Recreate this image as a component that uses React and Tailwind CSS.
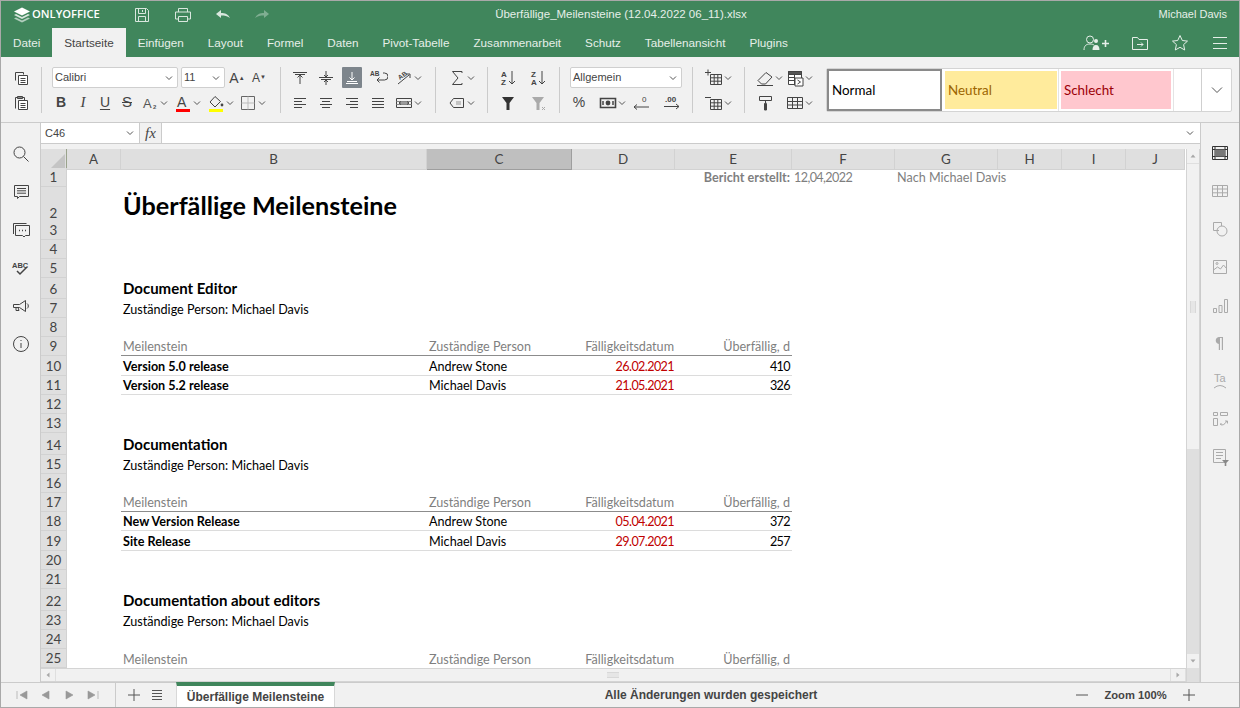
import React from "react";

const GRID =
  "grid grid-cols-[26px_54px_306px_145px_103px_117px_103px_103px_64px_64px_59px]";
const COLUMNS = ["A", "B", "C", "D", "E", "F", "G", "H", "I", "J"];
const SHEET_FONT = "font-['Lato',sans-serif] text-[12.6px]";

const Svg = ({ children, className = "w-5 h-5", stroke = "#444" }) => (
  <svg viewBox="0 0 20 20" className={`${className} shrink-0`} fill="none" stroke={stroke} strokeWidth="1">
    {children}
  </svg>
);

const Chev = () => (
  <svg viewBox="0 0 8 8" className="w-2 h-2 shrink-0" fill="none" stroke="#555" strokeWidth="1">
    <path d="M1 2.5 4 5.5 7 2.5" />
  </svg>
);

// toolbar glyphs
const icons = {
  copy: <><path d="M4.5 12.5v-8h8v2" /><path d="M7.5 7.5h9v9h-9z" fill="#fff" /><path d="M9.5 10.5h5M9.5 12.5h5M9.5 14.5h5" /></>,
  paste: <><path d="M4.5 15.5v-11h2M11.5 4.5h2v3" /><path d="M6.5 3.5h5v2h-5z" fill="#888" /><path d="M7.5 7.5h9v9h-9z" fill="#fff" /><path d="M9.5 10.5h5M9.5 12.5h5M9.5 14.5h5" /></>,
  alignTop: <><path d="M3 4.5h14M5 6.5h10" /><path d="M10 7v9M7.5 9.5 10 7l2.5 2.5" /></>,
  alignMid: <><path d="M3 9.5h14M5 11.5h10" /><path d="M10 3v6M8 7l2 2 2-2M10 17v-5M8 14l2-2 2 2" /></>,
  alignBottom: <><path d="M4 15.5h12" stroke="#fff" /><path d="M5 13.5h10" stroke="#fff" /><path d="M10 4v8M7.5 9.5 10 12l2.5-2.5" stroke="#fff" /></>,
  wrap: <><text x="2" y="8" fontSize="6.5" fontWeight="700" fill="#444" stroke="none" fontFamily="Liberation Sans">AB</text><path d="M15 5h1.5a2.5 2.5 0 0 1 0 7H9M11.5 9.5 9 12l2.5 2.5" /></>,
  orient: <><text x="4" y="10" fontSize="6.5" fontWeight="700" fill="#444" stroke="none" fontFamily="Liberation Sans" transform="rotate(-35 8 8)">AB</text><path d="M4 16 15 7M12 6h4v4" /></>,
  left: <path d="M4 5.5h12M4 8.5h8M4 11.5h12M4 14.5h8" />,
  center: <path d="M4 5.5h12M6 8.5h8M4 11.5h12M6 14.5h8" />,
  right: <path d="M4 5.5h12M8 8.5h8M4 11.5h12M8 14.5h8" />,
  justify: <path d="M4 5.5h12M4 8.5h12M4 11.5h12M4 14.5h12" />,
  merge: <><path d="M2.5 5.5h15v9h-15z" /><path d="M2.5 8.5h15M2.5 11.5h15" stroke="#888" /><path d="M5 10h10M7 8.5 5 10l2 1.5M13 8.5l2 1.5-2 1.5" /></>,
  sum: <path d="M15 5V3.5H5.5L11 10l-5.5 6.5H15V15" />,
  named: <><path d="M6.5 5.5h10v9h-10L3 10z" /><path d="M9 8h5v4H9z" fill="#888" stroke="none" /><path d="M9 9h5M9 11h5" stroke="#fff" /></>,
  az: <><text x="3" y="9" fontSize="8" fontWeight="700" fill="#444" stroke="none" fontFamily="Liberation Sans">A</text><text x="3" y="17" fontSize="8" fontWeight="700" fill="#444" stroke="none" fontFamily="Liberation Sans">Z</text><path d="M14 3v13M11 13l3 3 3-3" /></>,
  za: <><text x="3" y="9" fontSize="8" fontWeight="700" fill="#444" stroke="none" fontFamily="Liberation Sans">Z</text><text x="3" y="17" fontSize="8" fontWeight="700" fill="#444" stroke="none" fontFamily="Liberation Sans">A</text><path d="M14 3v13M11 13l3 3 3-3" /></>,
  filter: <path d="M4 4h12l-4.5 6v7h-3v-7z" fill="#333" stroke="none" />,
  filterOff: <><path d="M4 4h12l-4.5 6v7h-3v-7z" fill="#aaa" stroke="none" /><path d="M14 14l3 3M17 14l-3 3" stroke="#aaa" /></>,
  currency: <><path d="M2.5 5.5h15v9h-15z" strokeWidth="1.6" stroke="#444" /><circle cx="10" cy="10" r="2.4" fill="#444" stroke="none" /><path d="M5 8v4M15 8v4" strokeWidth="1.5" /></>,
  decDown: <><text x="11" y="9" fontSize="8" fill="#444" stroke="none" fontFamily="Liberation Sans">0</text><path d="M18 14H3M6 11.5 3 14l3 2.5" /></>,
  decUp: <><text x="3" y="9" fontSize="8" fontWeight="700" fill="#444" stroke="none" fontFamily="Liberation Sans">.00</text><path d="M2 13.5h15M14 11l3 2.5-3 2.5" /></>,
  insert: <><path d="M6.5 6.5h11v10h-11zM6.5 9.8h11M6.5 13.2h11M10.2 6.5v10M13.8 6.5v10" /><path d="M1 4.5h6M4 1.5v6" /></>,
  remove: <><path d="M6.5 6.5h11v10h-11zM6.5 9.8h11M6.5 13.2h11M10.2 6.5v10M13.8 6.5v10" /><path d="M1 4.5h6" /></>,
  eraser: <path d="M3 12.5 11 4.5l6 4.5-6.5 7H6.5zM2 17.5h16" />,
  conditional: <><path d="M3.5 3.5h13v13h-13z" fill="#fff" /><path d="M3.5 3.5h13v3h-13z" fill="#555" /><path d="M3.5 9.5h6M3.5 12.5h6M9.5 6.5v10" /><path d="M10 10h8v8h-8z" fill="#fff" /><path d="M12.5 12l3 2-3 2" /></>,
  roller: <><path d="M4.5 3.5h12v4h-12z" /><path d="M10.5 7.5v3h-1v6.5h2V10.5" fill="#444" /></>,
  table: <><path d="M2.5 4.5h15v11h-15z" /><path d="M2.5 8.5h15M2.5 12h15M7.5 4.5v11M12.5 4.5v11" /></>,
};

const Glyph = ({ name }) => <Svg>{icons[name]}</Svg>;

const Drop = ({ name, className = "" }) => (
  <div className={`flex items-center w-7 ${className}`}>
    <Glyph name={name} />
    <Chev />
  </div>
);

const Letter = ({ children, className = "" }) => (
  <div className={`w-[22px] h-[22px] flex items-center justify-center text-[#444] ${className}`}>
    {children}
  </div>
);

const Group = ({ className = "", children }) => (
  <div className={`h-[46px] flex flex-col gap-[4px] border-r border-[#cbcbcb] ${className}`}>{children}</div>
);

const Row = ({ children, className = "" }) => (
  <div className={`h-[21px] flex items-center ${className}`}>{children}</div>
);

const SelectBox = ({ value, className }) => (
  <div className={`h-[21px] bg-white border border-[#cfcfcf] rounded-[2px] flex items-center justify-between pl-[2px] pr-[4px] text-[11px] text-[#444] ${className}`}>
    <span>{value}</span>
    <Chev />
  </div>
);

const ColorA = ({ bar, children }) => (
  <svg viewBox="0 0 20 20" className="w-5 h-5 shrink-0" fill="none" stroke="#444">
    {children}
    <path d="M3 16h14v3H3z" fill={bar} stroke="none" />
  </svg>
);

function Toolbar() {
  return (
    <div className="h-[66px] bg-[#f1f1f1] border-b border-[#cbcbcb] pt-[10px] flex items-start font-['Liberation_Sans',sans-serif]">
      <Group className="w-[41px] items-center">
        <Row><Glyph name="copy" /></Row>
        <Row><Glyph name="paste" /></Row>
      </Group>

      <Group className="w-[239px]">
        <Row className="pl-[10px]">
          <SelectBox value="Calibri" className="w-[126px]" />
          <SelectBox value="11" className="w-[44px] ml-[3px]" />
          <div className="w-[22px] text-center text-[14px] text-[#444] ml-[1px] leading-none">A<sup className="text-[6px]">▲</sup></div>
          <div className="w-[22px] text-center text-[12px] text-[#444] leading-none">A<sup className="text-[6px]">▼</sup></div>
        </Row>
        <Row className="pl-[8px]">
          <Letter className="font-bold text-[14px]">B</Letter>
          <Letter className="italic text-[15px] font-['Liberation_Serif',serif]">I</Letter>
          <Letter className="underline text-[14px] underline-offset-2">U</Letter>
          <Letter className="line-through text-[15px]">S</Letter>
          <div className="flex items-center w-7 ml-[2px]">
            <Svg><text x="3" y="15" fontSize="13" fill="#555" stroke="none" fontFamily="Liberation Sans">A</text><text x="13" y="16" fontSize="6" fontWeight="700" fill="#555" stroke="none" fontFamily="Liberation Sans">2</text></Svg>
            <Chev />
          </div>
          <div className="flex items-center w-7 ml-[5px]">
            <ColorA bar="#ff0000"><text x="4" y="14" fontSize="14" fill="#444" stroke="none" fontFamily="Liberation Sans">A</text></ColorA>
            <Chev />
          </div>
          <div className="flex items-center w-7 ml-[5px]">
            <ColorA bar="#ffff00"><path d="M4 9 9 3.5l5.5 5L9 14z" /><circle cx="16" cy="12" r="1.4" fill="#444" stroke="none" /></ColorA>
            <Chev />
          </div>
          <div className="flex items-center w-7 ml-[4px]">
            <Svg><path d="M3.5 3.5h13v13h-13z" stroke="#666" /><path d="M10 3.5v13M3.5 10h13" stroke="#bbb" /></Svg>
            <Chev />
          </div>
        </Row>
      </Group>

      <Group className="w-[155px] pl-[9px]">
        <Row className="gap-[6px]">
          <Glyph name="alignTop" />
          <Glyph name="alignMid" />
          <div className="w-5 h-[21px] bg-[#7d858c] flex items-center justify-center rounded-[1px]"><Glyph name="alignBottom" /></div>
          <Glyph name="wrap" />
          <Drop name="orient" />
        </Row>
        <Row className="gap-[6px]">
          <Glyph name="left" />
          <Glyph name="center" />
          <Glyph name="right" />
          <Glyph name="justify" />
          <Drop name="merge" />
        </Row>
      </Group>

      <Group className="w-[52px] pl-[11px]">
        <Row><Drop name="sum" /></Row>
        <Row><Drop name="named" /></Row>
      </Group>

      <Group className="w-[72px] pl-[10px]">
        <Row className="gap-[10px]"><Glyph name="az" /><Glyph name="za" /></Row>
        <Row className="gap-[10px]"><Glyph name="filter" /><Glyph name="filterOff" /></Row>
      </Group>

      <Group className="w-[133px] pl-[10px]">
        <Row><SelectBox value="Allgemein" className="w-[112px]" /></Row>
        <Row className="-ml-[1px]">
          <div className="w-5 text-center text-[14px] text-[#444]">%</div>
          <Drop name="currency" className="ml-[9px]" />
          <div className="ml-[5px]"><Glyph name="decDown" /></div>
          <div className="ml-[11px]"><Glyph name="decUp" /></div>
        </Row>
      </Group>

      <Group className="w-[52px] pl-[11px]">
        <Row><Drop name="insert" /></Row>
        <Row><Drop name="remove" /></Row>
      </Group>

      <div className="w-[81px] h-[46px] flex flex-col gap-[4px] pl-[10px]">
        <Row><Drop name="eraser" /><Drop name="conditional" className="ml-[2px]" /></Row>
        <Row><div className="w-7"><Glyph name="roller" /></div><Drop name="table" className="ml-[2px]" /></Row>
      </div>

      <div className="w-[406px] h-[44px] mt-[1px] bg-white border border-[#d4d4d4] rounded-[2px] flex items-stretch font-['Lato',sans-serif] text-[13.4px]">
        <div className="w-[115px] border-2 border-[#8a8a8a] flex items-center pl-[3px] text-black">Normal</div>
        <div className="w-[117px] p-[2px] border-r border-[#e4e4e4]">
          <div className="h-full w-[112px] ml-[1px] bg-[#ffeb9c] flex items-center pl-[3px] text-[#9c6500]">Neutral</div>
        </div>
        <div className="w-[115px] p-[2px] border-r border-[#e4e4e4]">
          <div className="h-full bg-[#ffc7ce] flex items-center pl-[3px] text-[#9c0006]">Schlecht</div>
        </div>
        <div className="flex-1 border-r border-[#cfcfcf]" />
        <div className="w-[29px] flex items-center justify-center">
          <svg viewBox="0 0 12 8" className="w-3 h-2" fill="none" stroke="#555"><path d="M1 1.5 6 6.5 11 1.5" /></svg>
        </div>
      </div>
    </div>
  );
}

const leftRail = [
  <><circle cx="8.5" cy="8.5" r="5.5" /><path d="m12.5 12.5 5 5" /></>,
  <><path d="M3.5 3.5h14v11h-9l-2 2v-2h-3z" /><path d="M6 6.5h9M6 8.8h9M6 11.2h9" /></>,
  <><path d="M2.5 14V3.5h13" /><path d="M4.5 5.5h14v10h-4l-1.5 1.5-1.5-1.5h-7z" /><path d="M8 10.5h1M11 10.5h1M14 10.5h1" strokeWidth="1.5" /></>,
  <><text x="1" y="10" fontSize="7.5" fontWeight="700" fill="#444" stroke="none" fontFamily="Liberation Sans">ABC</text><path d="m6 13 3 3 7-7" strokeWidth="1.5" /></>,
  <><path d="M2.5 8.5h6l6-4v11l-6-4h-6zM5 11.5v3h3l-1-3" /><path d="M16 7.5a3 3 0 0 1 0 5" /></>,
  <><circle cx="10" cy="10" r="7.5" /><path d="M10 6v1M10 9v5" /></>,
];

const rightRail = [
  <><path d="M2.5 3.5h15v13h-15z" stroke="#333" /><path d="M2.5 6.5h15M2.5 13.5h15M5 3.5v13M15 3.5v13" stroke="#333" /><path d="M5 6.5h10v7H5z" fill="#777" stroke="none" /></>,
  <><path d="M2.5 4.5h15v11h-15zM2.5 8h15M2.5 11.8h15M7.5 4.5v11M12.5 4.5v11" /></>,
  <><path d="M9 11.5H3.5v-8h8V7" /><circle cx="12" cy="12" r="5" /></>,
  <><path d="M3.5 3.5h13v13h-13z" /><path d="m3.5 13 4-3 3 2 3-4 3 3.5" /><circle cx="7" cy="6.5" r="1" /></>,
  <><path d="M3.5 13.5h3v4h-3zM9 10.5h3v7H9zM14.5 4.5h3v13h-3z" /></>,
  <path d="M13 4v13h-1.2V5H10v12H8.8v-6a4 3.6 0 0 1 0-7z" fill="#aaa" stroke="none" />,
  <><text x="4" y="11" fontSize="11" fill="#aaa" stroke="none" fontFamily="Liberation Sans">Ta</text><path d="M4 17q6-5 12 0" /></>,
  <><path d="M3.5 3.5h4v3h-4zM10.5 3.5h7v3h-7zM3.5 9.5h4v7h-4z" /><path d="M10 15q3 3 7-3M15 12h2.5v2.5M10 15l2 0" /></>,
  <><path d="M3.5 2.5h12v13h-12zM6 5.5h7M6 8.5h7M6 11.5h5" /><path d="M12 13h7l-2.7 3v3h-1.6v-3z" fill="#888" stroke="none" /></>,
];

// one row of the sheet: label number, height class and cells
const rows = [
  { n: 1, h: "h-[19px]", meta: true },
  { n: 2, h: "h-[34px]", heading: "Überfällige Meilensteine" },
  { n: 3, h: "h-[19px]" },
  { n: 4, h: "h-[19px]" },
  { n: 5, h: "h-[19px]" },
  { n: 6, h: "h-[21px]", title: "Document Editor" },
  { n: 7, h: "h-[19px]", owner: true },
  { n: 8, h: "h-[19px]" },
  { n: 9, h: "h-[19px]", head: true },
  { n: 10, h: "h-[20px]", data: ["Version 5.0 release", "Andrew Stone", "26.02.2021", "410"] },
  { n: 11, h: "h-[19px]", data: ["Version 5.2 release", "Michael Davis", "21.05.2021", "326"] },
  { n: 12, h: "h-[19px]" },
  { n: 13, h: "h-[19px]" },
  { n: 14, h: "h-[22px]", title: "Documentation" },
  { n: 15, h: "h-[19px]", owner: true },
  { n: 16, h: "h-[19px]" },
  { n: 17, h: "h-[19px]", head: true },
  { n: 18, h: "h-[19px]", data: ["New Version Release", "Andrew Stone", "05.04.2021", "372"] },
  { n: 19, h: "h-[20px]", data: ["Site Release", "Michael Davis", "29.07.2021", "257"] },
  { n: 20, h: "h-[19px]" },
  { n: 21, h: "h-[19px]" },
  { n: 22, h: "h-[22px]", title: "Documentation about editors" },
  { n: 23, h: "h-[19px]", owner: true },
  { n: 24, h: "h-[19px]" },
  { n: 25, h: "h-[19px]", head: true, last: true },
];

const Cell = ({ className = "", children }) => (
  <div className={`px-[2px] flex items-end whitespace-nowrap min-w-0 ${className}`}>{children}</div>
);

function SheetRow({ row }) {
  const headLine = row.head && !row.last ? "border-b border-[#8c8c8c]" : "";
  const dataLine = row.data ? "border-b border-[#dcdcdc]" : "";
  const line = `${headLine} ${dataLine}`;
  const headText = "text-[#7f7f7f] leading-[16px]";
  const dataText = "leading-[16px]";
  return (
    <div className={`${GRID} ${row.h} ${SHEET_FONT}`}>
      <div className="bg-[#dfdfdf] border-r border-b border-[#d2d2d2] flex items-end justify-center leading-[18px] text-[13.4px] text-[#444]">{row.n}</div>
      <div />
      {row.meta && (
        <>
          <div />
          <div />
          <div />
          <Cell className="justify-end font-bold text-[#7f7f7f] leading-[18px]">Bericht erstellt:</Cell>
          <Cell className="text-[#7f7f7f] tracking-[-0.6px] leading-[18px]">12,04,2022</Cell>
          <Cell className="text-[#7f7f7f] leading-[18px]">Nach Michael Davis</Cell>
        </>
      )}
      {row.heading && <Cell className="font-bold text-[25.2px] text-black leading-[36px]">{row.heading}</Cell>}
      {row.title && <Cell className="font-bold text-[15px] text-black leading-[21px]">{row.title}</Cell>}
      {row.owner && <Cell className="text-black leading-[16px]">Zuständige Person: Michael Davis</Cell>}
      {row.head && (
        <>
          <Cell className={`${headText} ${line}`}>Meilenstein</Cell>
          <Cell className={`${headText} ${line}`}>Zuständige Person</Cell>
          <Cell className={`justify-end pr-[1px] ${headText} ${line}`}>Fälligkeitsdatum</Cell>
          <Cell className={`justify-end ${headText} ${line}`}>Überfällig, d</Cell>
        </>
      )}
      {row.data && (
        <>
          <Cell className={`font-bold text-black ${dataText} ${line}`}>{row.data[0]}</Cell>
          <Cell className={`text-black ${dataText} ${line}`}>{row.data[1]}</Cell>
          <Cell className={`justify-end text-[#c00000] pr-[1px] tracking-[-0.6px] ${dataText} ${line}`}>{row.data[2]}</Cell>
          <Cell className={`justify-end text-black tracking-[-0.6px] ${dataText} ${line}`}>{row.data[3]}</Cell>
        </>
      )}
    </div>
  );
}

const Tri = ({ d }) => (
  <svg viewBox="0 0 8 8" className="w-2 h-2"><path d={d} fill="#a8a8a8" /></svg>
);

const Grip = ({ className }) => <div className={className} />;

function Sheet() {
  return (
    <div className="flex-1 flex min-h-0">
      <div className="w-[1145px] flex flex-col">
        <div className="h-[519px] overflow-hidden bg-white">
          <div className={`${GRID} h-[19px] font-['Lato',sans-serif] text-[13.4px] text-[#444]`}>
            <div className="bg-[#dfdfdf] border-r border-b border-[#9aa38c] flex items-end justify-end overflow-hidden">
              <svg viewBox="0 0 14 14" className="w-[14px] h-[14px] mr-[1px] mb-[1px]"><path d="M14 0v14H0z" fill="#c4c4c4" /></svg>
            </div>
            {COLUMNS.map((c) => (
              <div
                key={c}
                className={
                  c === "C"
                    ? "bg-[#bfbfbf] border-r border-b border-[#9e9e9e] flex items-center justify-center"
                    : "bg-[#dfdfdf] border-r border-b border-[#d2d2d2] flex items-center justify-center"
                }
              >
                {c}
              </div>
            ))}
          </div>
          {rows.map((row) => (
            <SheetRow key={row.n} row={row} />
          ))}
        </div>
        <div className="h-[14px] bg-[#dfdfdf] border-y border-[#d4d4d4] flex">
          <div className="w-[14px] bg-[#f1f1f1] flex items-center justify-center"><Tri d="M5.5 1.5v5L2.5 4z" /></div>
          <div className="flex-1 bg-[#f1f1f1] ml-[1px] flex items-center justify-center">
            <Grip className="w-[12px] h-[6px] border-y border-[#d8d8d8] bg-[#e6e6e6]" />
          </div>
          <div className="w-[14px] bg-[#f1f1f1] ml-[1px] mr-[1px] flex items-center justify-center"><Tri d="M2.5 1.5v5L5.5 4z" /></div>
        </div>
      </div>
      <div className="w-[14px] bg-[#dfdfdf] border-x border-[#d4d4d4] flex flex-col">
        <div className="h-[14px] bg-[#f1f1f1] flex items-center justify-center"><Tri d="M1.5 5.5h5L4 2.5z" /></div>
        <div className="h-[285px] mt-[1px] bg-[#f1f1f1] flex items-center justify-center">
          <Grip className="w-[6px] h-[12px] border-x border-[#d8d8d8] bg-[#e6e6e6]" />
        </div>
        <div className="flex-1" />
        <div className="h-[14px] bg-[#f1f1f1] flex items-center justify-center"><Tri d="M1.5 2.5h5L4 5.5z" /></div>
        <div className="h-[14px]" />
      </div>
    </div>
  );
}

const navIcons = [
  "M2 4v8M12 4v8L5 8z",
  "M11 4v8L4 8z",
  "M5 4v8l7-4z",
  "M14 4v8M4 4v8l7-4z",
];

export default function App() {
  return (
    <div className="w-[1240px] h-[708px] border border-[#a9a9a9] flex flex-col overflow-hidden bg-[#f1f1f1] font-['Liberation_Sans',sans-serif]">
      {/* title bar */}
      <div className="h-[27px] bg-[#40865c] flex items-center text-white text-[11.5px]">
        <div className="w-[494px] flex items-center">
          <svg viewBox="0 0 18 18" className="w-[18px] h-[18px] ml-[12px]" fill="#fff">
            <path d="M9 1.5 17 5.5 9 9.5 1 5.5z" />
            <path d="m3 8-2 1 8 4 8-4-2-1-6 3z" opacity=".8" />
            <path d="m3 11.5-2 1 8 4 8-4-2-1-6 3z" opacity=".6" />
          </svg>
          <span className="ml-[1px] font-['Open_Sans',sans-serif] font-semibold text-[11.2px] w-[84px]">ONLYOFFICE</span>
          <svg viewBox="0 0 20 20" className="w-5 h-5 ml-[16px]" fill="none" stroke="#d9e7de">
            <path d="M3.5 3.5h11l2 2v11h-13z" /><path d="M6.5 3.5v5h7v-5M6.5 16.5v-5h7v5M10.5 5v2" />
          </svg>
          <svg viewBox="0 0 20 20" className="w-5 h-5 ml-[21px]" fill="none" stroke="#d9e7de">
            <path d="M5.5 7V3.5h9V7M5.5 14h-3V7h15v7h-3" /><path d="M5.5 11.5h9v5h-9z" />
          </svg>
          <svg viewBox="0 0 20 20" className="w-5 h-5 ml-[20px]" fill="#d9e7de">
            <path d="M3 9 8 5v3c4 0 7 1 9 5-3-2-5-2.5-9-2.5V13z" />
          </svg>
          <svg viewBox="0 0 20 20" className="w-5 h-5 ml-[19px]" fill="#7fae92">
            <path d="M17 9 12 5v3c-4 0-7 1-9 5 3-2 5-2.5 9-2.5V13z" />
          </svg>
        </div>
        <div className="w-[252px] text-center whitespace-nowrap text-[#e6efe9]">Überfällige_Meilensteine (12.04.2022 06_11).xlsx</div>
        <div className="flex-1 text-right pr-[12px] text-[11px] text-[#e6efe9]">Michael Davis</div>
      </div>

      {/* tabs */}
      <div className="h-[29px] bg-[#40865c] flex items-stretch text-[11.7px] text-[#e6efe9]">
        {["Datei", "Startseite", "Einfügen", "Layout", "Formel", "Daten", "Pivot-Tabelle", "Zusammenarbeit", "Schutz", "Tabellenansicht", "Plugins"].map((t) => (
          <div
            key={t}
            className={
              t === "Startseite"
                ? "px-3 flex items-center bg-[#f1f1f1] text-[#444]"
                : "px-3 flex items-center"
            }
          >
            {t}
          </div>
        ))}
        <div className="flex-1 flex items-center justify-end pr-[9px]">
          <svg viewBox="0 0 28 20" className="w-7 h-5" fill="none" stroke="#e6efe9">
            <circle cx="8" cy="6.5" r="3.5" />
            <path d="M2 17c0-4 2-6 6-6 2 0 3 .5 4 1" />
            <circle cx="14" cy="8" r="2" fill="#e6efe9" stroke="none" />
            <path d="M10.5 17c0-3 1-5 3.5-5s3.5 2 3.5 5z" fill="#e6efe9" stroke="none" />
            <path d="M20 10.5h7M23.5 7v7" strokeWidth="1.6" />
          </svg>
          <svg viewBox="0 0 20 20" className="w-5 h-5 ml-[20px]" fill="none" stroke="#e6efe9">
            <path d="M2.5 4.5h5l1.5 2h8.5v10h-15zM7 11.5h6M11 9.5l2 2-2 2" />
          </svg>
          <svg viewBox="0 0 20 20" className="w-5 h-5 ml-[20px]" fill="none" stroke="#e6efe9">
            <path d="m10 2.5 2.3 5 5.2.6-3.900 3.500 1.100 5.400-4.700-2.700-4.700 2.700 1.100-5.400L2.500 8.100l5.200-.6z" />
          </svg>
          <svg viewBox="0 0 20 20" className="w-5 h-5 ml-[20px]" fill="none" stroke="#e6efe9">
            <path d="M3 4.5h14M3 10.5h14M3 15.5h14" />
          </svg>
        </div>
      </div>

      <Toolbar />

      {/* main area */}
      <div className="h-[559px] flex">
        <div className="w-[40px] border-r border-[#cbcbcb] flex flex-col items-center pt-[21px] gap-[18px]">
          {leftRail.map((g, i) => (
            <Svg key={i}>{g}</Svg>
          ))}
        </div>
        <div className="w-[1159px] flex flex-col">
          <div className="h-[21px] border-b border-[#cbcbcb] flex bg-white text-[11px] text-[#444]">
            <div className="w-[99px] flex items-center justify-between pl-[4px] pr-[5px] border-r border-[#cbcbcb]">
              <span>C46</span>
              <Chev />
            </div>
            <div className="w-[22px] bg-[#f1f1f1] border-r border-[#cbcbcb] flex items-center justify-center font-['Liberation_Serif',serif] italic text-[15px]">fx</div>
            <div className="flex-1 flex items-center justify-end pr-[6px]"><Chev /></div>
          </div>
          <div className="h-[5px]" />
          <Sheet />
        </div>
        <div className="flex-1 border-l border-[#cbcbcb] flex flex-col items-center pt-[20px] gap-[18px]">
          {rightRail.map((g, i) => (
            <Svg key={i} stroke="#aaa">{g}</Svg>
          ))}
        </div>
      </div>

      {/* status bar */}
      <div className="flex-1 border-t border-[#cbcbcb] flex items-stretch text-[12px] font-bold text-[#444]">
        <div className="w-[115px] border-r border-[#cbcbcb] flex items-center pl-[14px] gap-[7px]">
          {navIcons.map((d) => (
            <svg key={d} viewBox="0 0 16 16" className="w-4 h-4" fill="#999" stroke="#999" strokeWidth=".6"><path d={d} /></svg>
          ))}
        </div>
        <div className="w-[60px] flex items-center pl-[11px] gap-[9px] font-normal">
          <svg viewBox="0 0 14 14" className="w-[14px] h-[14px]" fill="none" stroke="#555"><path d="M1 7h12M7 1v12" /></svg>
          <svg viewBox="0 0 14 14" className="w-[14px] h-[14px]" fill="none" stroke="#555"><path d="M2 2.5h10M2 5.5h10M2 8.5h10M2 11.5h10" /></svg>
        </div>
        <div className="w-[159px] -mt-[1px] bg-white border-t-[4px] border-x border-x-[#d8d8d8] border-t-[#40865c] flex items-center justify-center text-[#444]">Überfällige Meilensteine</div>
        <div className="flex-1 flex items-center justify-center pl-[16px]">Alle Änderungen wurden gespeichert</div>
        <div className="w-[168px] flex items-center justify-between pr-[43px]">
          <svg viewBox="0 0 14 14" className="w-[14px] h-[14px] ml-[4px]" fill="none" stroke="#555"><path d="M1 7h12" /></svg>
          <span className="text-[11.2px]">Zoom 100%</span>
          <svg viewBox="0 0 14 14" className="w-[14px] h-[14px]" fill="none" stroke="#555"><path d="M1 7h12M7 1v12" /></svg>
        </div>
      </div>
    </div>
  );
}
